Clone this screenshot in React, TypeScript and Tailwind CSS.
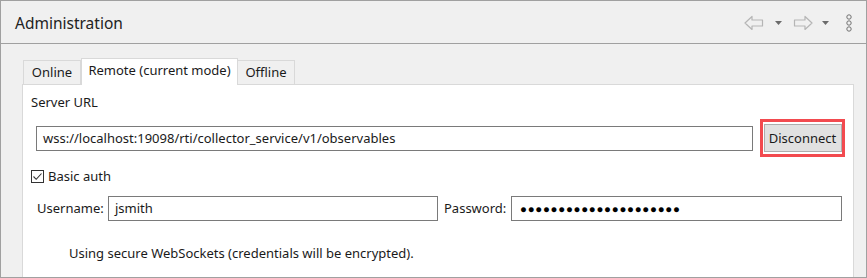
import React from "react";

const font = { fontFamily: '"Noto Sans", "Open Sans", sans-serif' };

function BackArrow() {
  return (
    <svg width="20" height="16" viewBox="0 0 20 16">
      <path d="M1 8 L8 1.5 L8 5 L18.5 5 L18.5 11 L8 11 L8 14.5 Z" fill="none" stroke="#b5b5b5" strokeWidth="1.2" strokeLinejoin="round" />
    </svg>
  );
}
function FwdArrow() {
  return (
    <svg width="20" height="16" viewBox="0 0 20 16">
      <path d="M19 8 L12 1.5 L12 5 L1.5 5 L1.5 11 L12 11 L12 14.5 Z" fill="none" stroke="#b5b5b5" strokeWidth="1.2" strokeLinejoin="round" />
    </svg>
  );
}
function Tri() {
  return (
    <svg width="7" height="4" viewBox="0 0 7 4">
      <path d="M0 0 L7 0 L3.5 4 Z" fill="#6b6b6b" />
    </svg>
  );
}
function Kebab() {
  return (
    <svg width="8" height="18" viewBox="0 0 8 18">
      <circle cx="4" cy="3" r="2.2" fill="none" stroke="#707070" strokeWidth="1" />
      <circle cx="4" cy="9" r="2.2" fill="none" stroke="#707070" strokeWidth="1" />
      <circle cx="4" cy="15" r="2.2" fill="none" stroke="#707070" strokeWidth="1" />
    </svg>
  );
}

export default function App() {
  const dots = "\u25CF".repeat(21);
  return (
    <div
      className="w-[867px] h-[278px] border border-[#a0a0a0] bg-[#f0f0f0] flex flex-col text-[13px] text-[#1a1a1a] overflow-hidden"
      style={font}
    >
      {/* Header */}
      <div className="h-[43px] shrink-0 border-b border-[#a0a0a0] flex items-center pl-[14px] pr-[13px]">
        <div className="text-[15.5px] text-[#222] leading-none pt-[3px]">Administration</div>
        <div className="ml-auto flex items-center pt-[1px]">
          <div className="mr-[11px]"><BackArrow /></div>
          <div className="mr-[11px]"><Tri /></div>
          <div className="mr-[9px]"><FwdArrow /></div>
          <div className="mr-[16px]"><Tri /></div>
          <Kebab />
        </div>
      </div>

      {/* Body */}
      <div className="flex-1 flex flex-col pl-[21px] pr-[12px] pt-[14px]">
        {/* Tabs */}
        <div className="flex items-end h-[26px] relative z-10 pl-[1px]">
          <div className="h-[24px] w-[58px] border border-b-0 border-[#d9d9d9] bg-[#f0f0f0] flex items-center justify-center leading-none">
            Online
          </div>
          <div className="h-[27px] -mb-[1px] w-[157px] border border-b-0 border-[#d9d9d9] bg-white flex items-center justify-center leading-none pb-[3px]">
            Remote (current mode)
          </div>
          <div className="h-[24px] w-[57px] border border-b-0 border-l-0 border-[#d9d9d9] bg-[#f0f0f0] flex items-center justify-center leading-none">
            Offline
          </div>
        </div>

        {/* Panel */}
        <div className="flex-1 border border-b-0 border-[#d9d9d9] bg-white flex flex-col">
          <div className="h-[18px] leading-[18px] mt-[8px] ml-[8px]">Server URL</div>

          <div className="flex items-center mt-[8px] ml-[13px] mr-[8px] h-[38px]">
            <div className="w-[717px] h-[25px] border border-[#7a7a7a] flex items-center pl-[6px] leading-none">
              wss://localhost:19098/rti/collector_service/v1/observables
            </div>
            <div className="ml-auto w-[85px] h-[38px] border-[3px] border-[#f24a4f] flex items-center justify-center">
              <div className="w-[78px] h-[28px] bg-[#e1e1e1] border border-[#adadad] flex items-center justify-center leading-none">
                Disconnect
              </div>
            </div>
          </div>

          <div className="flex items-center mt-[12px] ml-[8px] h-[14px]">
            <div className="w-[13px] h-[13px] border border-[#333] flex items-center justify-center">
              <svg width="11" height="11" viewBox="0 0 11 11">
                <path d="M1.5 5.5 L4.2 8.3 L9.5 2.5" fill="none" stroke="#333" strokeWidth="1.1" />
              </svg>
            </div>
            <span className="ml-[4px] leading-none">Basic auth</span>
          </div>

          <div className="flex items-center mt-[13px] ml-[14px] h-[25px]">
            <span className="w-[71px] leading-none">Username:</span>
            <div className="w-[330px] h-[25px] border border-[#7a7a7a] flex items-center pl-[6px] leading-none">
              jsmith
            </div>
            <span className="ml-[6px] w-[67px] leading-none">Password:</span>
            <div className="w-[331px] h-[25px] border border-[#7a7a7a] flex items-center pl-[8px] leading-none text-[11.5px] tracking-[0.7px] text-black">
              {dots}
            </div>
          </div>

          <div className="mt-[26px] ml-[46px] leading-none">
            Using secure WebSockets (credentials will be encrypted).
          </div>
        </div>
      </div>
    </div>
  );
}
